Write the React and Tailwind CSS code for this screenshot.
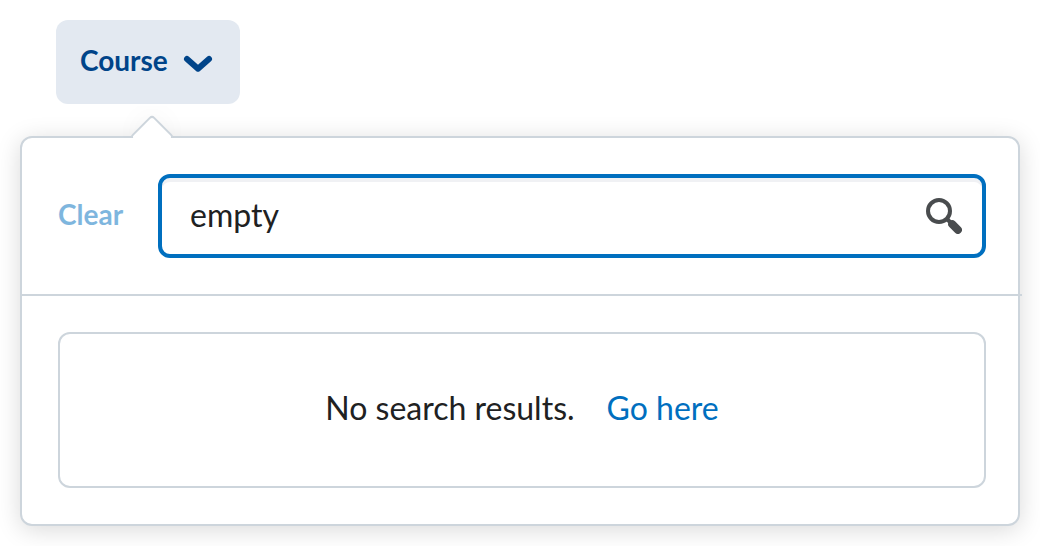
import { useState } from "react";

function ChevronDown() {
  return (
    <svg className="h-9 w-9" viewBox="0 0 36 36" fill="none" aria-hidden="true">
      <path
        d="M7 15 18 24.7 29 15"
        stroke="currentColor"
        strokeWidth="6"
        strokeLinecap="round"
        strokeLinejoin="round"
      />
    </svg>
  );
}

function SearchIcon() {
  return (
    <svg className="h-9 w-9" viewBox="0 0 36 36" fill="none" stroke="currentColor" aria-hidden="true">
      <circle cx="13" cy="13" r="11" strokeWidth="4" />
      <path d="M20.5 20.5 25 25" strokeWidth="4" />
      <path d="M26.2 26.2 31.9 31.9" strokeWidth="8" strokeLinecap="round" />
    </svg>
  );
}

export default function App() {
  const [query, setQuery] = useState("empty");

  return (
    <main className="bg-white p-5 font-['Lato',sans-serif] text-[#202122]">
      <button
        type="button"
        aria-expanded="true"
        aria-controls="course-filter"
        className="ml-9 flex h-21 items-center gap-3 rounded-xl bg-[#e3e9f1] pr-6 pl-6 text-[28px] leading-9 font-bold text-[#004489]"
      >
        <span className="pb-1">Course</span>
        <ChevronDown />
      </button>

      <section
        id="course-filter"
        className="relative mt-8 rounded-xl border-2 border-[#cdd5dc] bg-white shadow-[0_4px_24px_rgba(0,0,0,0.15)]"
      >
        <div className="absolute -top-8 left-[98px] h-8 w-16 overflow-hidden">
          <div className="absolute top-[15px] left-4 h-8 w-8 rotate-45 rounded-[4px] border-2 border-[#cdd5dc] bg-white shadow-[-4px_-4px_24px_rgba(0,0,0,0.03)]" />
        </div>

        <div className="-mr-1">
          <div className="flex items-center gap-9 border-b-2 border-[#cdd5dc] p-9">
            <button
              type="button"
              onClick={() => setQuery("")}
              className="w-16 shrink-0 pb-1 text-left text-[28px] leading-9 font-bold text-[#006fbf] opacity-50"
            >
              Clear
            </button>
            <form
              role="search"
              onSubmit={(event) => event.preventDefault()}
              className="flex h-21 min-w-0 flex-1 items-center rounded-xl border-4 border-[#006fbf] pr-5 pl-7 shadow-[inset_0_4px_0_#f0f1f4]"
            >
              <input
                type="text"
                aria-label="Search courses"
                value={query}
                onChange={(event) => setQuery(event.target.value)}
                className="h-12 min-w-0 flex-1 bg-transparent pb-0.5 text-[32px] outline-none"
              />
              <button type="submit" aria-label="Search" className="text-[#494c4e]">
                <SearchIcon />
              </button>
            </form>
          </div>

          <div className="p-9">
            <div className="flex items-center justify-center gap-8 rounded-xl border-2 border-[#cdd5dc] px-9 pt-[50px] pb-[54px] text-[32px] leading-12">
              <p>No search results.</p>
              <a href="#all-courses" className="text-[#006fbf]">
                Go here
              </a>
            </div>
          </div>
        </div>
      </section>
    </main>
  );
}
